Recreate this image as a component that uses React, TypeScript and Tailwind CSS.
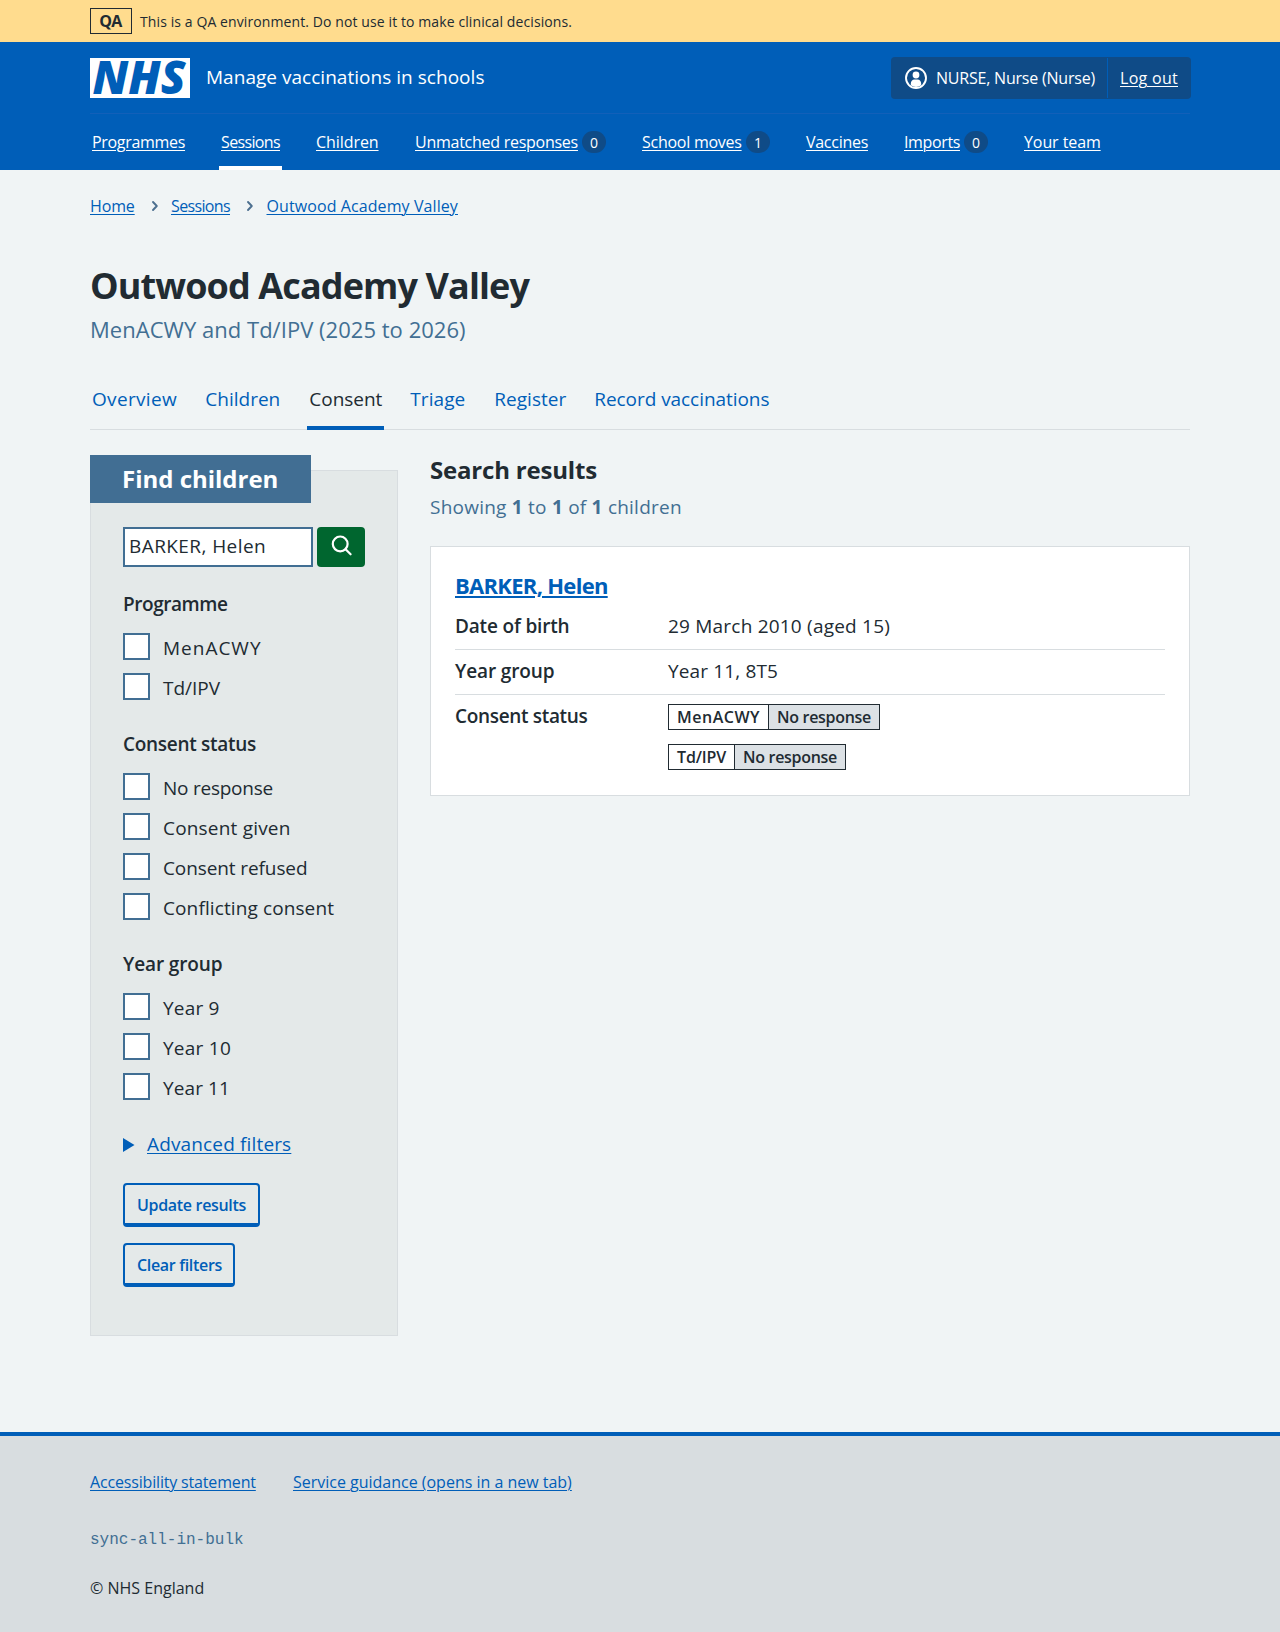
import type { ReactNode } from "react";

function NavItem({ label, tracking, width, active, count }: { label: string; tracking: string; width: string; active?: boolean; count?: number }) {
  return (
    <li className={`flex h-[56px] items-center gap-[4px] px-[2px] pt-[4px] ${active ? "border-b-4 border-white" : "border-b-4 border-transparent"}`}>
      <a href="#" className={`whitespace-nowrap text-[16px] leading-[24px] text-white underline decoration-1 underline-offset-[2px] ${tracking} ${width}`}>
        {label}
      </a>
      {count !== undefined && (
        <span className="flex h-[22px] w-[24px] items-center justify-center rounded-[12px] bg-[#0f4b87] pt-px text-[14px] leading-[22px] text-white">{count}</span>
      )}
    </li>
  );
}

function Tab({ children, className, active }: { children: ReactNode; className: string; active?: boolean }) {
  return (
    <li className={`relative h-[48px] px-[2px] pt-[3px] text-[19px] leading-[28px] whitespace-nowrap ${active ? "text-[#212b32]" : "text-[#005eb8]"}`}>
      <span className={`block ${className}`}>{children}</span>
      {active && <span className="absolute inset-x-0 bottom-0 h-[4px] bg-[#005eb8]" />}
    </li>
  );
}

function CheckRow({ label, tracking }: { label: string; tracking: string }) {
  return (
    <label className="flex h-[40px] items-start">
      <span className="mt-[0.4px] h-[27px] w-[27px] border-2 border-[#416e93] bg-white" />
      <span className={`ml-[13px] text-[19px] leading-[30px] whitespace-nowrap ${tracking}`}>{label}</span>
    </label>
  );
}

function Group({ title, tracking, className, children }: { title: string; tracking: string; className: string; children: ReactNode }) {
  return (
    <fieldset className={className}>
      <legend className={`mb-[15px] text-[19px] leading-[28px] font-semibold ${tracking}`}>{title}</legend>
      {children}
    </fieldset>
  );
}

function Chevron() {
  return (
    <svg width="8" height="12" viewBox="0 0 8 12" fill="none" stroke="#4c6f8f" strokeWidth="1.9" strokeLinecap="round" strokeLinejoin="round">
      <path d="M2 2l3.8 4L2 10" />
    </svg>
  );
}

function StatusTag({ name, nameClass }: { name: string; nameClass: string }) {
  return (
    <div className="flex h-[26px] w-max border border-[#212b32] text-[16px] leading-[25px] font-semibold whitespace-nowrap">
      <span className={`border-r border-[#212b32] bg-white pl-[8px] ${nameClass}`}>{name}</span>
      <span className="w-[110px] bg-[#dce1e5] pl-[8px] tracking-[-0.3px]">No response</span>
    </div>
  );
}

export default function App() {
  return (
    <div className="flex h-[1632px] w-[1280px] flex-col overflow-hidden bg-[#f0f4f5] font-['Open_Sans','Noto_Sans',sans-serif] text-[#212b32]">
      <div className="flex h-[42px] shrink-0 items-center bg-[#ffdc8e] px-[90px]">
        <strong className="flex h-[26px] w-[42px] items-center justify-center border border-[#212b32] pr-px text-[16px] font-bold tracking-[-0.54px]">QA</strong>
        <span className="ml-[8px] pt-[2px] text-[14px] leading-[20px] tracking-[0.1px] whitespace-nowrap">This is a QA environment. Do not use it to make clinical decisions.</span>
      </div>

      <header className="h-[128px] shrink-0 bg-[#005eb8] px-[90px]">
        <div className="flex h-[72px] items-start border-b border-[#1260b9]">
          <svg className="mt-[16px] overflow-visible" width="100" height="40" viewBox="0 0 100 40">
            <rect width="100" height="40" fill="#fff" />
            <text x="2.5" y="36.3" fontFamily="Open Sans" fontSize="45.5" fontWeight="800" fontStyle="italic" fill="#005eb8" textLength="93" lengthAdjust="spacingAndGlyphs">NHS</text>
          </svg>
          <span className="mt-[21px] ml-[16px] text-[19px] leading-[28px] font-medium tracking-[0.03px] text-white">Manage vaccinations in schools</span>
          <div className="mt-[15px] -mr-px ml-auto flex h-[42px] w-[300px] items-center rounded-[4px] bg-[#0f4b87] text-[16px] leading-[24px] whitespace-nowrap text-white">
            <svg className="ml-[14px]" width="22" height="22" viewBox="0 0 22 22" fill="none">
              <circle cx="11" cy="11" r="10" stroke="#fff" strokeWidth="1.9" />
              <circle cx="11" cy="8" r="3.4" fill="#fff" />
              <path d="M5.8 18.3v-1.6c0-2.4 1.5-4.1 3.6-4.1h3.2c2.1 0 3.6 1.7 3.6 4.1v1.6a10 10 0 0 1-10.4 0z" fill="#fff" />
            </svg>
            <span className="ml-[9px] w-[171px] tracking-[-0.21px]">NURSE, Nurse (Nurse)</span>
            <span className="h-[40px] w-px bg-[#005eb8]" />
            <a href="#" className="ml-[12px] tracking-[0.29px] underline decoration-1 underline-offset-[2px]">Log out</a>
          </div>
        </div>
        <ul className="flex gap-[32px]">
          <NavItem label="Programmes" tracking="tracking-[-0.31px]" width="w-[93px]" />
          <NavItem label="Sessions" tracking="tracking-[-0.64px]" width="w-[59px]" active />
          <NavItem label="Children" tracking="tracking-[-0.07px]" width="w-[63px]" />
          <NavItem label="Unmatched responses" tracking="tracking-[-0.26px]" width="w-[163px]" count={0} />
          <NavItem label="School moves" tracking="tracking-[-0.26px]" width="w-[100px]" count={1} />
          <NavItem label="Vaccines" tracking="tracking-[-0.28px]" width="w-[62px]" />
          <NavItem label="Imports" tracking="tracking-[-0.37px]" width="w-[56px]" count={0} />
          <NavItem label="Your team" tracking="tracking-[-0.09px]" width="w-[77px]" />
        </ul>
      </header>

      <main className="h-[1262px] shrink-0 px-[90px]">
        <nav className="flex items-center pt-[24px] text-[16px] leading-[24px] whitespace-nowrap text-[#005eb8]">
          <a href="#" className="w-[45px] tracking-[-0.13px] underline decoration-1 underline-offset-[2px]">Home</a>
          <span className="flex w-[36px] justify-center pl-[4px]"><Chevron /></span>
          <a href="#" className="w-[59px] tracking-[-0.64px] underline decoration-1 underline-offset-[2px]">Sessions</a>
          <span className="flex w-[36.5px] justify-center pl-[4px]"><Chevron /></span>
          <a href="#" className="tracking-[0.09px] underline decoration-1 underline-offset-[2px]">Outwood Academy Valley</a>
        </nav>

        <h1 className="mt-[46px] text-[36px] leading-[44px] font-bold tracking-[-0.89px]">Outwood Academy Valley</h1>
        <p className="mt-[7px] text-[22px] leading-[28px] tracking-[0.03px] text-[#426f93]">MenACWY and Td/IPV (2025 to 2026)</p>

        <ul className="mt-[39px] flex h-[48px] gap-[24px] border-b border-[#d8dde0]">
          <Tab className="mt-0 w-[85.3px] pt-0 tracking-[0.33px]">Overview</Tab>
          <Tab className="w-[76px]">Children</Tab>
          <Tab className="w-[73px] tracking-[-0.03px]" active>Consent</Tab>
          <Tab className="w-[56px] tracking-[0.07px]">Triage</Tab>
          <Tab className="w-[72px] tracking-[0.03px]">Register</Tab>
          <Tab className="w-[176px] tracking-[-0.06px]">Record vaccinations</Tab>
        </ul>

        <div className="mt-[25px] flex gap-[32px]">
          <section className="w-[308px] pt-[15px]">
            <div className="h-[866px] border border-[#d8dde0] bg-[#e4e9e9] px-[32px]">
              <h2 className="-mt-[16px] -ml-[33px] h-[48px] w-[221px] bg-[#416e93] pl-[32px] text-[24px] leading-[47px] font-bold tracking-[-0.01px] whitespace-nowrap text-white">Find children</h2>
              <div className="mt-[24px] flex gap-[4px]">
                <div className="h-[40px] w-[190px] border-2 border-[#416e93] bg-white pl-[4px] text-[19px] leading-[34px] tracking-[0.42px]">BARKER, Helen</div>
                <button className="flex h-[40px] w-[48px] justify-center rounded-[4px] bg-[#00662f] pt-[8px] pl-px">
                  <svg width="22" height="22" viewBox="0 0 22 22" fill="none" stroke="#fff" strokeWidth="2.2" strokeLinecap="round">
                    <circle cx="9.2" cy="8.9" r="7.4" />
                    <path d="M14.6 14.3l5 5" />
                  </svg>
                </button>
              </div>
              <Group title="Programme" tracking="tracking-[-0.44px]" className="mt-[23px]">
                <CheckRow label="MenACWY" tracking="tracking-[0.99px]" />
                <CheckRow label="Td/IPV" tracking="tracking-[-0.02px]" />
              </Group>
              <Group title="Consent status" tracking="tracking-[-0.29px]" className="mt-[17px]">
                <CheckRow label="No response" tracking="tracking-[-0.24px]" />
                <CheckRow label="Consent given" tracking="tracking-[0.19px]" />
                <CheckRow label="Consent refused" tracking="tracking-[-0.1px]" />
                <CheckRow label="Conflicting consent" tracking="tracking-[0.11px]" />
              </Group>
              <Group title="Year group" tracking="tracking-[-0.11px]" className="mt-[17px]">
                <CheckRow label="Year 9" tracking="tracking-[0.18px]" />
                <CheckRow label="Year 10" tracking="tracking-[0.25px]" />
                <CheckRow label="Year 11" tracking="tracking-[0.1px]" />
              </Group>
              <div className="mt-[17px] flex h-[28px] items-center text-[#005eb8]">
                <svg className="mt-[2px]" width="12" height="14" viewBox="0 0 12 14" fill="currentColor"><path d="M0 0v14l11.5-7z" /></svg>
                <span className="ml-[12px] text-[19px] leading-[28px] tracking-[0.15px] underline decoration-1 underline-offset-[2px]">Advanced filters</span>
              </div>
              <button className="mt-[25px] block h-[44px] w-[137px] rounded-[4px] border-2 border-b-4 border-[#005eb8] pt-[2px] pl-[12px] text-left text-[16px] leading-[36px] font-semibold tracking-[-0.32px] whitespace-nowrap text-[#005eb8]">Update results</button>
              <button className="mt-[16px] block h-[44px] w-[112px] rounded-[4px] border-2 border-b-4 border-[#005eb8] pt-[2px] pl-[12px] text-left text-[16px] leading-[36px] font-semibold tracking-[-0.32px] whitespace-nowrap text-[#005eb8]">Clear filters</button>
            </div>
          </section>

          <section className="w-[760px]">
            <h2 className="text-[24px] leading-[30px] font-bold tracking-[-0.19px]">Search results</h2>
            <p className="mt-[8px] text-[19px] leading-[28px] tracking-[0.23px] text-[#426f93]">
              Showing <b className="font-bold">1</b> to <b className="font-bold">1</b> of <b className="font-bold">1</b> children
            </p>
            <article className="mt-[25px] h-[250px] border border-[#d8dde0] bg-white px-[24px] pt-[23px]">
              <h3 className="text-[22px] leading-[30px] font-bold tracking-[-0.71px] text-[#005eb8]">
                <a href="#" className="underline decoration-2 underline-offset-[2px]">BARKER, Helen</a>
              </h3>
              <dl className="text-[19px] leading-[28px] whitespace-nowrap">
                <div className="flex h-[50px] border-b border-[#d8dde0] pt-[12px]">
                  <dt className="w-[213px] font-semibold tracking-[-0.17px]">Date of birth</dt>
                  <dd className="tracking-[0.21px]">29 March 2010 (aged 15)</dd>
                </div>
                <div className="flex h-[45px] border-b border-[#d8dde0] pt-[7px]">
                  <dt className="w-[213px] font-semibold tracking-[-0.11px]">Year group</dt>
                  <dd className="tracking-[0.14px]">Year 11, 8T5</dd>
                </div>
                <div className="flex pt-[7px]">
                  <dt className="w-[213px] font-semibold tracking-[-0.33px]">Consent status</dt>
                  <dd className="flex flex-col gap-[14px] pt-[2px]">
                    <StatusTag name="MenACWY" nameClass="w-[100px] tracking-[0.51px]" />
                    <StatusTag name="Td/IPV" nameClass="w-[66px] tracking-[-0.15px]" />
                  </dd>
                </div>
              </dl>
            </article>
          </section>
        </div>
      </main>

      <footer className="flex-1 border-t-4 border-[#005eb8] bg-[#d8dde0] px-[90px] pt-[34px] text-[16px] leading-[24px] whitespace-nowrap">
        <div className="flex text-[#005eb8]">
          <a href="#" className="w-[203px] tracking-[-0.17px]"><span className="underline decoration-1 underline-offset-[2px]">Accessibility statement</span></a>
          <a href="#" className="tracking-[-0.01px] underline decoration-1 underline-offset-[2px]">Service guidance (opens in a new tab)</a>
        </div>
        <p className="mt-[34px] font-['Liberation_Mono',monospace] text-[#426f93]">sync-all-in-bulk</p>
        <p className="mt-[24px]">© NHS England</p>
      </footer>
    </div>
  );
}
